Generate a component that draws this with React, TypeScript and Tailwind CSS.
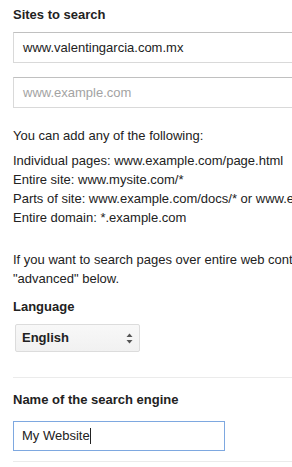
import React from "react";

function SelectArrows() {
  return (
    <svg width="7" height="11" viewBox="0 0 7 11" className="shrink-0">
      <path d="M3.5 0.5 L6.5 4 L0.5 4 Z" fill="#555" />
      <path d="M3.5 10.5 L6.5 7 L0.5 7 Z" fill="#555" />
    </svg>
  );
}

export default function App() {
  const font = { fontFamily: '"Liberation Sans", Arial, sans-serif' };
  return (
    <div
      className="w-[292px] h-[467px] overflow-hidden bg-white text-[#222] text-[13px]"
      style={font}
    >
      <div className="pl-[13px] pt-[7px]">
        <h2 className="font-bold text-[13px] leading-[16px]">Sites to search</h2>

        <div className="mt-[9px] w-[320px] h-[31px] border border-[#d9d9d9] border-t-[#c0c0c0] flex items-center pl-[9px] text-[13px]">
          www.valentingarcia.com.mx
        </div>
        <div className="mt-[14px] w-[320px] h-[31px] border border-[#d9d9d9] border-t-[#c0c0c0] flex items-center pl-[9px] text-[13px] text-[#a3a3a3]">
          www.example.com
        </div>

        <p className="mt-[18px] leading-[19px] whitespace-nowrap">
          You can add any of the following:
        </p>
        <p className="mt-[6px] leading-[19px] whitespace-nowrap">
          Individual pages: www.example.com/page.html
          <br />
          Entire site: www.mysite.com/*
          <br />
          Parts of site: www.example.com/docs/* or www.example.com/docs/
          <br />
          Entire domain: *.example.com
        </p>
        <p className="mt-[23px] leading-[19px] whitespace-nowrap">
          If you want to search pages over entire web content, select
          <br />
          "advanced" below.
        </p>

        <h2 className="mt-[11px] font-bold text-[13px] leading-[16px]">Language</h2>
        <div className="mt-[9px] ml-[2px] w-[125px] h-[28px] rounded-[2px] border border-[#dcdcdc] bg-gradient-to-b from-[#f8f8f8] to-[#f1f1f1] flex items-center justify-between pl-[6px] pr-[6px] font-bold text-[13px]">
          <span>English</span>
          <SelectArrows />
        </div>

        <div className="mt-[25px] h-px bg-[#ebebeb] w-[300px]" />

        <h2 className="mt-[14px] font-bold text-[13px] leading-[16px]">
          Name of the search engine
        </h2>
        <div className="mt-[13px] w-[212px] h-[30px] border border-[#7ea8e0] flex items-center pl-[8px] text-[13px]">
          <span>My Website</span>
          <span className="inline-block w-px h-[16px] bg-[#222]" />
        </div>

        <div className="mt-[10px] h-px bg-[#ebebeb] w-[300px]" />
      </div>
    </div>
  );
}
